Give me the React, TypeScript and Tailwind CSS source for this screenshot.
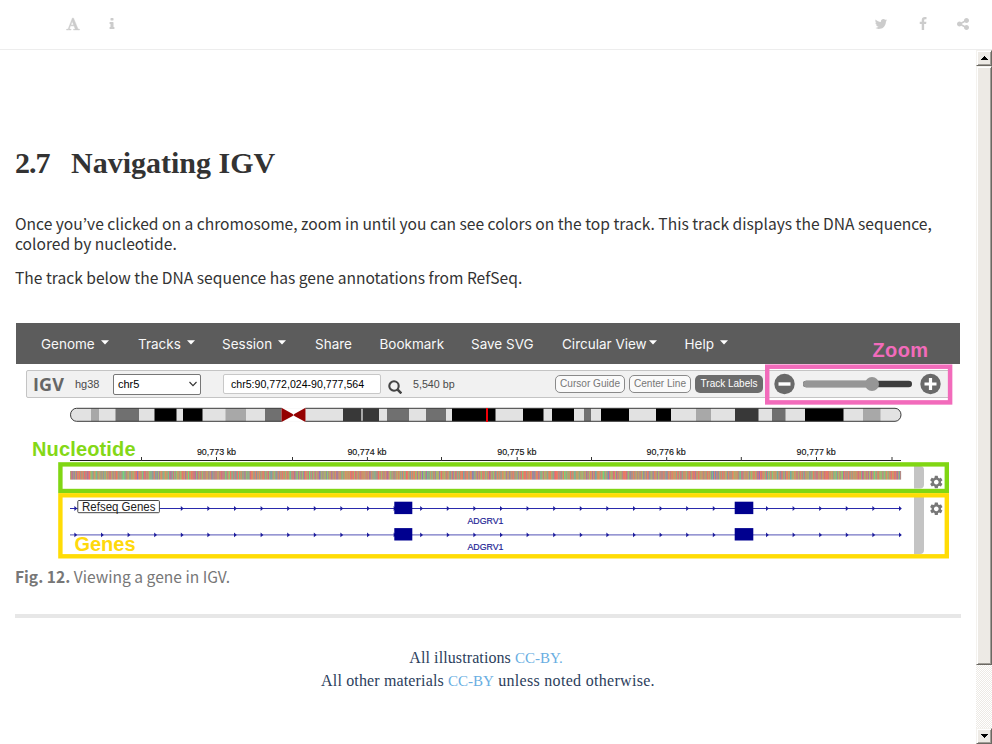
import React from "react";
import { MdSettings } from "react-icons/md";

function Glyph({ d, bold }: { d: string; bold?: boolean }) {
  return (
    <svg viewBox="0 0 1792 1792" className="block size-[14px] fill-[#cccccc]">
      <path d={d} stroke="#cccccc" strokeWidth={bold ? 60 : 0} />
    </svg>
  );
}

const FONT =
  "M789 559l-170 450q33 0 136.5 2t160.5 2q19 0 57-2-87-253-184-452zm-725 1105l2-79q23-7 56-12.5t57-10.5 49.5-14.5 44.5-29 31-50.5l237-616 280-724h128q8 14 11 21l205 480q33 78 106 257.5t114 274.5q15 34 58 144.5t72 168.5q20 45 35 57 19 15 88 29.5t84 20.5q6 38 6 57 0 5-.5 13.500t-.5 12.500q-63 0-190-8t-191-8q-76 0-215 7t-178 8q0-43 4-78l131-28q1 0 12.500-2.500t15.500-3.500 14.500-4.500 15-6.500 11-8 9-11 2.500-14q0-16-31-96.500t-72-177.500-42-100l-450-2q-26 58-76.500 195.500t-50.500 162.500q0 22 14 37.500t43.500 24.500 48.500 13.500 57 8.500 41 4q1 19 1 58 0 9-2 27-58 0-174.500-10t-174.500-10q-8 0-26.500 4t-21.500 4q-80 14-188 14z";
const INFO =
  "M1216 1344v128q0 26-19 45t-45 19h-512q-26 0-45-19t-19-45v-128q0-26 19-45t45-19h64v-384h-64q-26 0-45-19t-19-45v-128q0-26 19-45t45-19h384q26 0 45 19t19 45v576h64q26 0 45 19t19 45zm-128-1152v192q0 26-19 45t-45 19h-256q-26 0-45-19t-19-45v-192q0-26 19-45t45-19h256q26 0 45 19t19 45z";
const TWITTER =
  "M1684 408q-67 98-162 167 1 14 1 42 0 130-38 259.5t-115.5 248.5-184.5 210.5-258 146-323 54.5q-271 0-496-145 35 4 78 4 225 0 401-138-105-2-188-64.5t-114-159.5q33 5 61 5 43 0 85-11-112-23-185.5-111.5t-73.5-205.5v-4q68 38 146 41-66-44-105-115t-39-154q0-88 44-163 121 149 294.5 238.5t371.5 99.5q-8-38-8-74 0-134 94.5-228.5t228.5-94.5q140 0 236 102 109-21 205-78-37 115-142 178 93-10 186-50z";
const FACEBOOK =
  "M1343 12v264h-157q-86 0-116 36t-30 108v189h293l-39 296h-254v759h-306v-759h-255v-296h255v-218q0-186 104-288.5t277-102.5q147 0 228 12z";
const SHARE =
  "M1344 1024q133 0 226.5 93.5t93.5 226.5-93.5 226.5-226.5 93.5-226.5-93.5-93.5-226.5q0-12 2-34l-360-180q-92 86-218 86-133 0-226.5-93.5t-93.5-226.5 93.5-226.5 226.5-93.5q126 0 218 86l360-180q-2-22-2-34 0-133 93.5-226.5t226.5-93.5 226.5 93.5 93.5 226.5-93.5 226.5-226.5 93.5q-126 0-218-86l-360 180q2 22 2 34t-2 34l360 180q92-86 218-86z";

function Header() {
  return (
    <header className="flex h-[50px] shrink-0 items-center border-b border-[#ededed] bg-white pb-[2px]">
      <div className="ml-[66px]"><Glyph d={FONT} bold /></div>
      <div className="ml-[25px]"><Glyph d={INFO} /></div>
      <div className="ml-auto"><Glyph d={TWITTER} /></div>
      <div className="ml-7"><Glyph d={FACEBOOK} /></div>
      <div className="mr-[22px] ml-[26px]"><Glyph d={SHARE} /></div>
    </header>
  );
}

const MENU = [
  { label: "Genome", box: "w-[97px]", caret: true },
  { label: "Tracks", box: "w-[84px]", caret: true },
  { label: "Session", box: "w-[93px]", caret: true },
  { label: "Share", box: "w-[64.5px]", caret: false },
  { label: "Bookmark", box: "w-[91.5px]", caret: false },
  { label: "Save SVG", box: "w-[91px]", caret: false },
  { label: "Circular View", box: "w-[122.5px]", caret: true },
  { label: "Help", box: "w-[60px]", caret: true },
];

function MenuBar() {
  return (
    <nav className="flex h-[41px] items-center bg-[#5c5c5c] pl-[25px] font-['Inter',sans-serif] text-[13.5px] text-[#f8f8f8]">
      {MENU.map((m) => (
        <div key={m.label} className={`flex shrink-0 items-center whitespace-nowrap ${m.box}`}>
          {m.label}
          {m.caret && (
            <svg viewBox="0 0 8 5" className={`mb-[3px] h-[5px] w-2 ${m.label === "Circular View" ? "ml-[2px]" : "ml-[6px]"}`}>
              <path d="M0 .3h8L4 4.6z" fill="#fff" />
            </svg>
          )}
        </div>
      ))}
    </nav>
  );
}

function Toolbar() {
  return (
    <div className="mt-1.5 ml-2.5 flex h-7 w-[926px] items-center rounded-[2px] border border-[#c4c4c4] bg-[#f1f1f1] font-['Liberation_Sans',sans-serif] text-[11px] text-[#4a4a4a]">
      <div className="ml-1.5 w-[42px] font-['Open_Sans',sans-serif] text-[18px] leading-none font-bold tracking-[0.1px] text-[#666]">IGV</div>
      <div className="w-[38px]">hg38</div>
      <div className="flex h-[21px] w-[88px] items-center justify-between rounded-[2px] border border-[#777] bg-white pr-[3px] pl-1 text-black">
        chr5
        <svg viewBox="0 0 8 6" className="h-1.5 w-2"><path d="M.5 1 4 4.7 7.5 1" fill="none" stroke="#333" strokeWidth="1.1" /></svg>
      </div>
      <div className="ml-[22px] flex h-5 w-[158px] items-center rounded-[2px] border border-[#c8c8c8] bg-white pl-[7px] text-[10.6px] whitespace-nowrap text-black">chr5:90,772,024-90,777,564</div>
      <svg viewBox="0 0 14 14" className="mt-[5px] ml-[7px] size-[14px] shrink-0" fill="none" stroke="#444">
        <circle cx="6" cy="6" r="4.7" strokeWidth="2.1" />
        <path d="m9.4 9.4 4 4" strokeWidth="2.6" />
      </svg>
      <div className="ml-[11px] w-[142px] shrink-0 text-[10.7px]">5,540 bp</div>
      <div className="flex h-[18px] w-[70px] shrink-0 items-center justify-center rounded-[5px] border border-[#8a8a8a] bg-[#fafafa] text-[10.1px] text-[#777]">Cursor Guide</div>
      <div className="ml-[4px] flex h-[18px] w-[62px] shrink-0 items-center justify-center rounded-[5px] border border-[#8a8a8a] bg-[#fafafa] text-[10.1px] text-[#777]">Center Line</div>
      <div className="ml-[4px] flex h-[18px] w-[68px] shrink-0 items-center justify-center rounded-[5px] bg-[#6c6c6c] text-[10px] text-white">Track Labels</div>
      <svg viewBox="0 0 168 22" className="ml-[11px] h-[22px] w-[168px] shrink-0">
        <circle cx="10.5" cy="11" r="10.2" fill="#696969" />
        <path d="M4.5 11h12" stroke="#fff" strokeWidth="3.4" />
        <rect x="29" y="7.7" width="109" height="6.6" rx="3.3" fill="#3c3c3c" />
        <rect x="29" y="7.7" width="72" height="6.6" rx="3.3" fill="#969696" />
        <circle cx="98" cy="11" r="7" fill="#969696" />
        <circle cx="156.5" cy="11" r="10.2" fill="#696969" />
        <path d="M150.5 11h12M156.5 5v12" stroke="#fff" strokeWidth="3.2" />
      </svg>
    </div>
  );
}

const BANDS: [number, number, string][] = [
  [91, 99, "#a8a8a8"], [115.5, 139, "#707070"], [154.5, 176.5, "#000"], [183, 202.5, "#000"],
  [225.5, 246, "#a8a8a8"], [265, 282, "#707070"], [343, 361.3, "#383838"], [361.3, 363, "#a8a8a8"], [363, 379, "#383838"],
  [387, 409, "#707070"], [426, 446, "#707070"], [452, 495.5, "#000"], [523, 543.5, "#000"],
  [552, 574, "#000"], [584, 591, "#707070"], [601, 629, "#000"], [656, 671, "#000"],
  [696, 711, "#a8a8a8"], [735, 758.5, "#383838"], [772, 785.5, "#707070"], [805, 843.5, "#000"], [863, 880.5, "#a8a8a8"],
];
const TICKS = [141.5, 216.5, 292.5, 367.4, 441.5, 517.2, 591.5, 666.7, 741.3, 816.5, 892];
const KB: [string, number][] = [["90,773 kb", 216.5], ["90,774 kb", 367], ["90,775 kb", 516.8], ["90,776 kb", 666.2], ["90,777 kb", 816.2]];

// Each stripe averages several bases, so colours are blends of the four base hues.
const BASES = [[115, 215, 120], [240, 108, 103], [118, 120, 205], [212, 152, 98]];
function stripes(): string[] {
  let seed = 7;
  const rand = () => ((seed = (seed * 16807) % 2147483647) / 2147483647);
  return Array.from({ length: 831 }, () => {
    const sum = [0, 0, 0];
    for (let i = 0; i < 4; i++) {
      const r = rand();
      const b = BASES[r < 0.25 ? 0 : r < 0.59 ? 1 : r < 0.73 ? 2 : 3];
      for (let c = 0; c < 3; c++) sum[c] += b[c] / 4;
    }
    return `rgb(${sum.map(Math.round).join(",")})`;
  });
}
const SEQ = stripes();

function GeneRow({ y, color }: { y: number; color: string }) {
  return (
    <g>
      <path d={`M70 ${y}H901`} stroke={color} strokeWidth="1.1" />
      {Array.from({ length: 32 }, (_, i) => (
        <path key={i} d={`M${74.4 + i * 26.6} ${y - 2.4}l2.8 2.4l-2.8 2.4z`} fill="#1c1c9c" />
      ))}
      <rect x="394.3" y={y - 6.8} width="18" height="12.4" fill="#00008f" />
      <rect x="734.7" y={y - 6.8} width="18.6" height="12.4" fill="#00008f" />
      <text x="467.5" y={y + 15.4} textLength="36" lengthAdjust="spacingAndGlyphs" fontSize="9.3" fill="#1c1c94" stroke="#1c1c94" strokeWidth=".2">ADGRV1</text>
    </g>
  );
}

function Tracks() {
  return (
    <svg viewBox="16 404 944 156" className="mt-[6px] block h-[156px] w-[944px] font-['Liberation_Sans',sans-serif]">
      <defs><clipPath id="chrom"><rect x="70.5" y="408.3" width="830.5" height="13" rx="6" /></clipPath></defs>
      <g clipPath="url(#chrom)">
        <rect x="70" y="408" width="832" height="14" fill="#e2e2e2" />
        {BANDS.map(([a, b, c]) => <rect key={a} x={a} y="408" width={b - a} height="14" fill={c} />)}
        <rect x="281.5" y="407" width="24" height="15" fill="#fff" />
      </g>
      <path d="M281.5 407.8 294.5 415 281.5 422ZM305.5 407.8 292.5 415 305.5 422Z" fill="#940000" />
      <path d="M281.5 408.3H76.5a6 6.5 0 0 0 0 13H281.5M305.5 408.3H895a6 6.5 0 0 1 0 13H305.5" fill="none" stroke="#3a3a3a" />
      <path d="M487 408v14" stroke="#f00008" strokeWidth="2" />

      <path d="M70 460.5H901" stroke="#222" />
      {TICKS.map((x) => <path key={x} d={`M${x} 457v4`} stroke="#333" />)}
      {KB.map(([t, x]) => <text key={t} x={x - 19.6} y="455.2" textLength="39.2" lengthAdjust="spacingAndGlyphs" fontSize="9.6" fill="#111" stroke="#111" strokeWidth=".15">{t}</text>)}

      {SEQ.map((c, i) => <rect key={i} x={70 + i} y="471" width="1.1" height="8.6" fill={c} />)}
      <path d="M914 466h6q4 0 4 4v14.5q0 4-4 4h-6ZM914 497h10v53q0 4-4 4h-6Z" fill="#c4c4c4" />

      <GeneRow y={508.5} color="#2a2aac" />
      <GeneRow y={534.9} color="#7474c4" />
      <rect x="77.8" y="500.5" width="81.6" height="12.2" rx="1" fill="#fff" stroke="#444" />
      <text x="82" y="510.7" textLength="73.5" lengthAdjust="spacingAndGlyphs" fontSize="12" fill="#222">Refseq Genes</text>

      <MdSettings x="928.5" y="474.3" width="16" height="16" color="#777" />
      <MdSettings x="928.5" y="501" width="16" height="16" color="#777" />
      <rect x="60.4" y="464.4" width="886.4" height="26.6" fill="none" stroke="#80d613" strokeWidth="4.4" />
      <rect x="60.4" y="495.3" width="886.4" height="61" fill="none" stroke="#ffdc05" strokeWidth="4.4" />
      <text x="32" y="456" textLength="103.5" fontSize="20" fontWeight="bold" fill="#84d816">Nucleotide</text>
      <text x="74.5" y="551.4" textLength="61" fontSize="20" fontWeight="bold" fill="#ffd90c">Genes</text>
    </svg>
  );
}

function Figure() {
  return (
    <figure className="relative ml-px w-[944px]">
      <MenuBar />
      <Toolbar />
      <Tracks />
      <svg viewBox="765 335 188 72" className="absolute top-3 left-[749px] h-[72px] w-[188px] font-['Liberation_Sans',sans-serif]">
        <rect x="767.2" y="366.7" width="182.9" height="35.7" fill="none" stroke="#f26bbb" strokeWidth="4.5" />
        <text x="872.5" y="356.5" textLength="55.5" fontSize="20" fontWeight="bold" fill="#f26bbb">Zoom</text>
      </svg>
    </figure>
  );
}

const BEVEL = "border border-t-[#f4f2ee] border-l-[#f4f2ee] border-r-[#6b6862] border-b-[#6b6862] bg-[#edeae5] shadow-[inset_1px_1px_#fff,inset_-1px_-1px_#a19e98]";

function ScrollBar() {
  return (
    <div className="flex w-4 shrink-0 flex-col bg-[repeating-conic-gradient(#edeae5_0_25%,#fff_0_50%)] bg-[length:2px_2px]">
      <div className={`flex h-4 items-center justify-center ${BEVEL}`}>
        <svg viewBox="0 0 7 4" className="h-1 w-[7px]" shapeRendering="crispEdges"><path d="M3 0h1v1h1v1h1v1h1v1H0V3h1V2h1V1h1z" /></svg>
      </div>
      <div className={`h-[599px] ${BEVEL}`} />
      <div className={`mt-auto flex h-4 items-center justify-center ${BEVEL}`}>
        <svg viewBox="0 0 7 4" className="h-1 w-[7px]" shapeRendering="crispEdges"><path d="M0 0h7v1H6v1H5v1H4v1H3V3H2V2H1V1H0z" /></svg>
      </div>
    </div>
  );
}

export default function App() {
  return (
    <div className="flex h-[744px] w-[992px] flex-col overflow-hidden bg-white">
      <Header />
      <div className="flex min-h-0 flex-1">
        <main className="min-w-0 flex-1 pr-[15px] pl-[15px] font-['Noto_Sans_CJK_KR',sans-serif] text-[15.6px] leading-[20px] text-[#333]">
          <h1 className="mt-[93px] flex h-10 items-center font-['Liberation_Serif',serif] text-[30px] leading-10 font-bold">
            <span className="w-14 tracking-[-1px]">2.7</span>
            <span className="whitespace-nowrap">Navigating IGV</span>
          </h1>
          <p className="mt-[30px] whitespace-nowrap">
            Once you’ve clicked on a chromosome, zoom in until you can see colors on the top track. This track displays the DNA sequence,
            <br />
            colored by nucleotide.
          </p>
          <p className="mt-[14px] mb-[36px]">The track below the DNA sequence has gene annotations from RefSeq.</p>
          <Figure />
          <p className="mt-[6px] text-[#777]"><b>Fig. 12.</b> Viewing a gene in IGV.</p>
          <hr className="mt-[28px] h-1 border-0 bg-[#e7e7e7]" />
          <footer className="mt-[29px] text-center font-['Liberation_Serif',serif] text-[16px] leading-[22px] text-[#2c3e5c]">
            <p className="pr-1"><span className="tracking-[0.1px]">All illustrations </span><a className="text-[15px] text-[#68aee2]">CC-BY.</a></p>
            <p className="mt-px">
              <span className="tracking-[0.15px]">All other materials </span>
              <a className="text-[15px] text-[#68aee2]">CC-BY</a>
              <span className="tracking-[0.3px]"> unless noted otherwise.</span>
            </p>
          </footer>
        </main>
        <ScrollBar />
      </div>
    </div>
  );
}
